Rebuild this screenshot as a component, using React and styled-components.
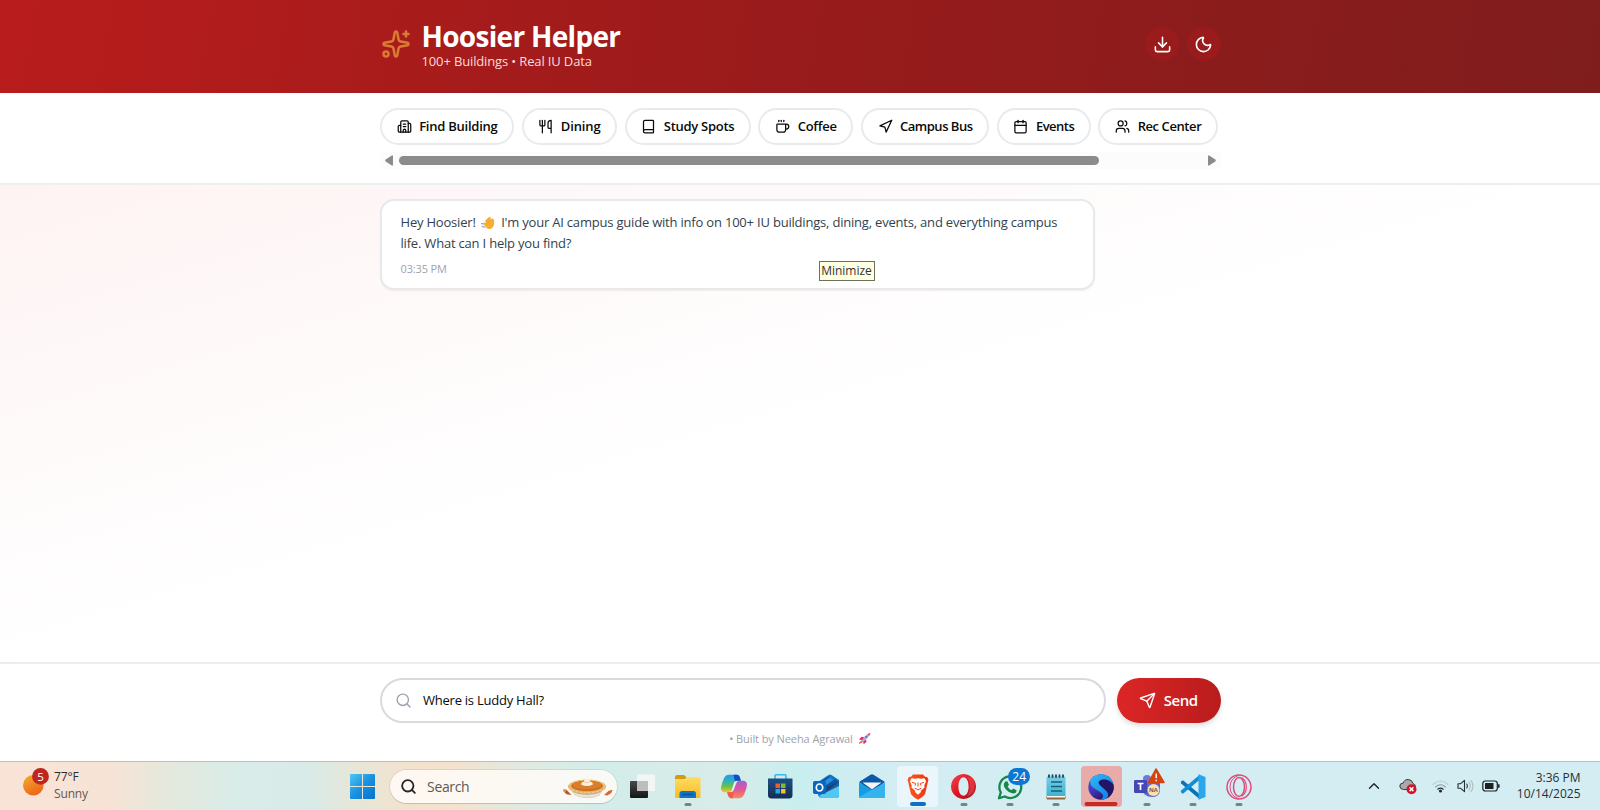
import React from "react";
import styled, { createGlobalStyle } from "styled-components";
import {
  Sparkles, Building2, Utensils, Book, Coffee, Navigation, Calendar,
  Users, Download, Moon, Send, Search, ChevronUp,
} from "lucide-react";

const GlobalStyle = createGlobalStyle`
  *, *::before, *::after { box-sizing: border-box; }
  body {
    margin: 0;
    background: #fff;
    font-family: "Open Sans", "Noto Sans", sans-serif;
    color: #111827;
  }
  svg { display: block; flex: none; }
`;

const Screen = styled.div`
  width: 1600px;
  height: 810px;
  display: flex;
  flex-direction: column;
  overflow: hidden;
`;

const Container = styled.div`
  width: 841px;
  margin: 0 auto;
`;

/* Header */
const Header = styled.header`
  height: 92.5px;
  flex: none;
  background: linear-gradient(100deg, #b91c1c, #991b1b 50%, #7f1d1d);
`;
const HeaderInner = styled(Container)`
  display: flex;
  align-items: center;
  height: 88px;
`;
const Brand = styled.div`
  display: flex;
  align-items: center;
  gap: 11px;
  padding-left: 1px;
  svg { color: #d97b32; }
`;
const Title = styled.h1`
  margin: 0;
  font-size: 28px;
  line-height: 34px;
  font-weight: 700;
  letter-spacing: -0.7px;
  color: #fff;
`;
const Subtitle = styled.p`
  margin: 0;
  font-size: 13px;
  line-height: 17px;
  letter-spacing: -0.14px;
  color: #fbdcdc;
`;
const HeaderActions = styled.div`
  display: flex;
  gap: 7.5px;
  margin-left: auto;
`;
const RoundButton = styled.button`
  width: 34px;
  height: 34px;
  padding: 0;
  border: 0;
  border-radius: 50%;
  display: grid;
  place-items: center;
  background: #991b1b;
  color: #fff;
`;

/* Quick actions */
const QuickNav = styled.nav`
  height: 92px;
  flex: none;
  padding-top: 15px;
  border-bottom: 2px solid #eeeff1;
  background: #fff;
`;
const Chips = styled.div`
  display: flex;
  gap: 7.6px;
  padding-left: 0.5px;
`;
const Chip = styled.button`
  height: 37.5px;
  display: flex;
  align-items: center;
  gap: 7.5px;
  padding: 0 14.6px 0 14.7px;
  border: 2px solid #e8eaee;
  border-radius: 19px;
  background: #fff;
  color: #0a0a0a;
  font: 600 13px/20px "Open Sans", sans-serif;
  letter-spacing: ${(p) => p.$tracking}px;
  white-space: nowrap;
`;
const ScrollTrack = styled.div`
  height: 17px;
  margin-top: 7px;
  padding: 0 5px;
  display: flex;
  align-items: center;
  background: #fcfcfc;
`;
const ScrollThumb = styled.div`
  width: 699.5px;
  height: 9px;
  margin-left: 6.5px;
  margin-right: auto;
  border-radius: 5px;
  background: #8b8b8b;
`;

/* Conversation */
const Chat = styled.main`
  flex: 1;
  min-height: 0;
  padding-top: 14.4px;
  background: linear-gradient(to bottom right, #fef3f3, #fff 50%, #fff);
`;
const Bubble = styled.article`
  position: relative;
  width: 714.5px;
  height: 91px;
  padding: 11px 18.5px;
  margin-left: 0.5px;
  border: 2px solid #e7e9ed;
  border-radius: 14px;
  background: #fff;
  box-shadow: 0 1px 2px rgba(0, 0, 0, 0.06);
`;
const Line = styled.p`
  margin: 0;
  display: flex;
  align-items: center;
  font-size: 13px;
  line-height: 21.6px;
  letter-spacing: -0.2px;
  color: #333f4e;
  white-space: nowrap;
  svg { margin: 0 6px 0 5.5px; }
`;
const Stamp = styled.time`
  display: block;
  margin-top: 6.4px;
  font-size: 11px;
  line-height: 16px;
  letter-spacing: -0.15px;
  color: #9ca3af;
`;
const Tooltip = styled.div`
  position: absolute;
  left: 436.5px;
  top: 60px;
  width: 56px;
  height: 20px;
  border: 1px solid #6d7058;
  background: #ffffe1;
  color: #333;
  font-size: 12px;
  line-height: 18px;
  text-align: center;
`;

/* Composer */
const Composer = styled.footer`
  height: 99.5px;
  flex: none;
  padding-top: 14px;
  border-top: 2px solid #ecedf0;
  background: #fff;
`;
const InputRow = styled.div`
  display: flex;
  gap: 11px;
  padding-left: 0.5px;
`;
const InputBox = styled.div`
  flex: 1;
  height: 45px;
  display: flex;
  align-items: center;
  gap: 11px;
  padding-left: 13px;
  border: 2px solid #d7dade;
  border-radius: 23px;
  font-size: 13px;
  letter-spacing: -0.24px;
  color: #0a0a0a;
  svg { color: #9ca3af; }
`;
const SendButton = styled.button`
  width: 104px;
  height: 45px;
  display: flex;
  align-items: center;
  justify-content: center;
  gap: 7.5px;
  border: 0;
  border-radius: 23px;
  background: linear-gradient(to right, #dc2626, #b91c1c);
  box-shadow: 0 3px 5px rgba(0, 0, 0, 0.13);
  color: #fff;
  font: 600 15px/20px "Open Sans", sans-serif;
  letter-spacing: -0.4px;
`;
const Credit = styled.p`
  margin: 8px 0 0;
  display: flex;
  justify-content: center;
  align-items: center;
  gap: 5px;
  font-size: 11px;
  line-height: 16px;
  letter-spacing: -0.08px;
  color: #9ca3af;
`;

/* Taskbar */
const Taskbar = styled.div`
  height: 49px;
  flex: none;
  display: flex;
  border-top: 1px solid #b2c1c1;
  background: linear-gradient(90deg, #f9e3d7 0, #f7e3d6 110px, #e6e8dc 165px, #d8ece8 235px,
    #d8ebe8 310px, #e6e6d9 350px, #f4e2cc 420px, #f2e3cf 460px, #dcebe4 540px, #d3edea 600px,
    #d8ece8 720px, #c9eeef 800px, #d3edf3 900px, #d3edf3 1600px);
`;
const Weather = styled.div`
  width: 339.4px;
  padding: 6px 0 0 23px;
  display: flex;
  align-items: flex-start;
  gap: 5px;
`;
const WeatherText = styled.div`
  font-size: 12px;
  line-height: 17px;
  letter-spacing: -0.15px;
  color: #2b2b2b;
  span { display: block; color: #5d5955; }
`;
const Slot = styled.div`
  position: relative;
  width: 45.9px;
  height: 48px;
  display: flex;
  justify-content: center;
  padding-top: 11.5px;
`;
const TeamsSlot = styled(Slot)`
  padding-top: 6px;
  padding-left: 5px;
`;
const Tile = styled.div`
  position: relative;
  width: 41px;
  height: 41px;
  margin-top: -8px;
  padding-top: 8px;
  display: flex;
  justify-content: center;
  border-radius: 4px;
  background: ${(p) => p.$color};
`;
const Indicator = styled.i`
  position: absolute;
  bottom: ${(p) => p.$bottom ?? 4}px;
  left: 50%;
  width: ${(p) => p.$width ?? 7}px;
  height: 3.4px;
  border-radius: 2px;
  transform: translateX(-50%);
  background: ${(p) => p.$color ?? "#788385"};
`;
const Count = styled.span`
  position: absolute;
  left: 21.5px;
  top: 5.5px;
  width: 22px;
  height: 17px;
  border-radius: 9px;
  background: #0b76d4;
  color: #fff;
  font-size: 12px;
  line-height: 17px;
  text-align: center;
`;
const SearchBox = styled.div`
  width: 227.5px;
  height: 33px;
  margin: 8px 2.5px 0 4.3px;
  padding: 0 4px 0 10.5px;
  display: flex;
  align-items: center;
  border-radius: 17px;
  background: rgba(255, 252, 247, 0.86);
  box-shadow: 0 0 0 0.7px rgba(120, 110, 90, 0.18), 0 1px 1px rgba(0, 0, 0, 0.12);
  font-size: 14px;
  letter-spacing: -0.35px;
  color: #5c5a58;
  span { margin: 0 auto 0 10px; }
`;
const Tray = styled.div`
  margin-left: auto;
  padding-right: 19.5px;
  display: flex;
`;
const TrayIcons = styled.div`
  height: 48px;
  display: flex;
  align-items: center;
  color: #1c2224;
`;
const TrayGap = styled.i`
  width: ${(p) => p.$width}px;
`;
const Clock = styled.div`
  width: 80.5px;
  padding-top: 7.5px;
  font-size: 12px;
  line-height: 16.5px;
  text-align: right;
  color: #2a3032;
`;

const chips = [
  ["Find Building", Building2, -0.25], ["Dining", Utensils, -0.15], ["Study Spots", Book, -0.29],
  ["Coffee", Coffee, -0.25], ["Campus Bus", Navigation, -0.5], ["Events", Calendar, -0.5],
  ["Rec Center", Users, -0.42],
];

const Grad = ({ id, stops, x2 = 0, y2 = 1 }) => (
  <linearGradient id={id} x1="0" y1="0" x2={x2} y2={y2}>
    {stops.map((c, i) => <stop key={i} offset={i / (stops.length - 1)} stopColor={c} />)}
  </linearGradient>
);

const Wave = () => (
  <svg width="14" height="14" viewBox="0 0 14 14">
    <path d="M.3 7.600l2.700.3M1.300 10.300l2.200.8" stroke="#8fa9bd" strokeWidth="1.300" strokeLinecap="round" />
    <path d="M2.600 7.800Q1.900 6.200 4 6.600L5.600 7 4.300 4.900Q4 3.800 5.200 3.800L7.800 1.300Q9.400.1 9.700 1.700L9.300 3.400 11.300 2.300Q13.300 2.700 13.200 6.500 13.100 11.800 9.500 12.900 6 13.400 4.500 11Z" fill="#f8ae34" />
    <path d="M5.300 3.800L8 7M7.300 2.300L9.300 5.400M4.400 5.500L7 8.700" stroke="#e8982a" strokeWidth=".5" />
  </svg>
);

const Rocket = () => (
  <svg width="13" height="13" viewBox="0 0 14 14">
    <path d="M1 8.200L4 5.200l3.300.6-2 3.200zM5.400 9.400l3-2 .8 3.100-3.100 2.600z" fill="#e92273" />
    <path d="M4 9.800Q6.400 4 12.700 1.200 11.600 7 5.400 10.800z" fill="#b7aac9" />
    <path d="M10 2.500L13.400.7 12 4.500Q11.500 3 10 2.500z" fill="#f1327c" />
    <circle cx="8.900" cy="5.200" r="1.200" fill="#5a79c8" />
    <path d="M3.800 9.200l1.500 1.500L2.900 12l-2 1 .8-2.300z" fill="#f46032" />
  </svg>
);

const Pie = () => (
  <svg width="50" height="24" viewBox="0 0 50 24">
    <path d="M.7 14l3 1.100 4.800 5-5-.9-3-3z" fill="#bd5426" />
    <path d="M.5 14l2 .5.3 2.700-2.300-1z" fill="#e5a15c" />
    <path d="M41 20l4.800-4.200 4-1-1.500 3.200-4 2.500z" fill="#d8652e" />
    <path d="M7 13h34l-4.700 7.400Q24 25.600 12 20.600z" fill="#c0b09c" />
    <path d="M9 17Q24 23 39 17l-3 3.500Q24 25 12 20.500z" fill="#e8e1d7" />
    <ellipse cx="24" cy="11.600" rx="19" ry="7" fill="#e3a959" />
    <ellipse cx="24" cy="11.500" rx="17.600" ry="6.200" fill="none" stroke="#f4c883" strokeWidth="1.400" strokeDasharray="3 1" />
    <ellipse cx="24" cy="10.700" rx="15.600" ry="5.200" fill="#c96e20" />
    <ellipse cx="24" cy="10.100" rx="14.400" ry="4.200" fill="#d97f2b" />
    <path d="M18 9.600q.3-2.500 3-3-.4-2 1.800-2.600L24 .5l1.500 3.600q2.200.6 1.600 2.500 2.800.5 2.800 3-5.800 3-11.900 0z" fill="#fff0dc" />
    <path d="M21 6.800q3.200 1.800 6-.2" fill="none" stroke="#d5b899" strokeWidth=".7" />
  </svg>
);

const Sun = () => (
  <svg width="26" height="29" viewBox="0 0 26 29">
    <defs><Grad id="sun" x2={0.5} stops={["#efb02f", "#f18a24", "#ee6718"]} /></defs>
    <circle cx="10.300" cy="17.200" r="10.300" fill="url(#sun)" />
    <circle cx="17.500" cy="8.400" r="8.400" fill="#bd271e" />
    <text x="17.600" y="12.500" textAnchor="middle" fontSize="11.500" fill="#fff">5</text>
  </svg>
);

const Windows = () => (
  <svg width="25" height="25" viewBox="0 0 25 25">
    <defs><Grad id="win" x2={1} stops={["#4ac8f6", "#1a90e0", "#0572cd"]} /></defs>
    <path d="M1 0h11v12H0V1q0-1 1-1zM13 0h11q1 0 1 1v11H13zM0 13h12v12H1q-1 0-1-1zM13 13h12v11q0 1-1 1H13z" fill="url(#win)" />
  </svg>
);

const TaskView = () => (
  <svg width="25" height="25" viewBox="0 0 25 25">
    <defs><Grad id="tv" stops={["#494949", "#151515"]} /></defs>
    <rect y="7" width="18" height="17" rx="1" fill="url(#tv)" />
    <rect x="7" y=".5" width="18" height="16.500" rx="1" fill="#f4f5f5" />
    <rect x="7" y="7" width="11" height="10" fill="#bcbebe" />
  </svg>
);

const Folder = () => (
  <svg width="26" height="24" viewBox="0 0 26 24">
    <defs><Grad id="fo" stops={["#ffdb63", "#f7bd26"]} /></defs>
    <path d="M0 3q0-2 2-2h6.500q1.500 0 2.500 2l1 2H0z" fill="#d39b17" />
    <path d="M0 5h9.500l3-1.700H24q1.500 0 1.500 1.500V23q0 1-1 1H1q-1 0-1-1z" fill="url(#fo)" />
    <path d="M4.500 24v-4.500q0-2.500 2.500-2.500h11.500q2.500 0 2.500 2.500V24z" fill="#1373c5" />
    <path d="M7.500 20.500h10.500" stroke="#0754a0" strokeWidth="1.400" strokeLinecap="round" />
  </svg>
);

const Copilot = () => (
  <svg width="26" height="25" viewBox="0 0 26 25">
    <defs>
      <Grad id="cp1" stops={["#229bf1", "#2ab2c0", "#6bc04a", "#f5c529"]} />
      <Grad id="cp2" stops={["#a75bd8", "#e0579a", "#fb8a52"]} />
    </defs>
    <path d="M8 .8h8.200q2 .2 2.800 2.900l.8 3h-3.500q-2.800 0-3.700 3L11 15q-1 3.300-4 3.300H3.400Q0 18-.1 14 .3 10 3 4.200 4.700.8 8 .8z" fill="url(#cp1)" />
    <path d="M18 24.200H9.800q-2-.2-2.800-2.900l-.8-3h3q2.800 0 3.700-3L15 10q1-3.300 4-3.300h3.600Q26 7 26 11q-.3 4-3 9.800-1.700 3.400-5 3.400z" fill="url(#cp2)" />
    <path d="M12.500.8h3.700q2 .2 2.800 2.900l.8 3h-3.500q-1.400 0-2.300.9z" fill="#134bc2" />
    <path d="M6.200 18.300h3q2.800 0 3.300-2.500l-.7 8.400H9.800q-2-.2-2.800-2.900z" fill="#f35a48" />
    <path d="M13.400 8.400q.9-1.600 2.500-1.600-1 .8-1.500 2.800l-1.900 6.500q-.7 2-2.100 2.100.9-.8 1.400-2.600z" fill="#e6f3f1" />
  </svg>
);

const Store = () => (
  <svg width="25" height="25" viewBox="0 0 25 25">
    <defs><Grad id="st" stops={["#1b5186", "#152d51"]} /></defs>
    <path d="M7 5V2q0-1.300 1.300-1.300h8.400Q18 .7 18 2v3" fill="none" stroke="#3bb7e7" strokeWidth="1.600" />
    <path d="M0 4.500h24.500V21q0 3.500-3.500 3.500H3.500Q0 24.500 0 21z" fill="url(#st)" />
    <path d="M7.500 9.500h4.500v4.500h-4.500z" fill="#f15b2d" /><path d="M13 9.500h4.500v4.500h-4.500z" fill="#80bd28" />
    <path d="M7.500 15h4.500v4.500h-4.500z" fill="#23a8e5" /><path d="M13 15h4.500v4.500h-4.500z" fill="#f9bd25" />
  </svg>
);

const Outlook = () => (
  <svg width="26" height="25" viewBox="0 0 26 25">
    <path d="M5 8L15.500 1Q17 0 18.500 1L26 6v15q0 3-3 3H9q-3 0-4-3z" fill="#1679c8" />
    <path d="M8 7l8-5 9 5-10 9-7-2z" fill="#0c55a1" />
    <path d="M9 9l8-6 4 2.500-11 8z" fill="#2591dc" />
    <path d="M26 8v13q0 3-3 3H9q-2 0-3-2l13-8z" fill="#51c7f1" />
    <path d="M26 7v5l-14 7 2-6z" fill="#133e7b" opacity=".75" />
    <rect y="7" width="13" height="13" rx="1.800" fill="#0968bd" />
    <ellipse cx="6.500" cy="13.500" rx="3.200" ry="3.500" fill="none" stroke="#fff" strokeWidth="1.700" />
  </svg>
);

const Mail = () => (
  <svg width="26" height="25" viewBox="0 0 26 25">
    <path d="M0 8L11.500.7Q13-.3 14.500.7L26 8 13 18z" fill="#0c59a7" />
    <path d="M0 8.500L26 23q0 1-1.500 1H1.500Q0 24 0 22.500z" fill="#159ee1" />
    <path d="M26 8.500v14q0 1.500-1.500 1.500H1.500L0 23z" fill="#35b3ee" />
    <path d="M3.500 8.500h19L13 15.300z" fill="#f6f6f4" />
  </svg>
);

const Brave = () => (
  <svg width="22" height="26" viewBox="0 0 22 26">
    <defs><Grad id="br" x2={1} y2={0} stops={["#f9581f", "#f03411"]} /></defs>
    <path d="M6 .5h10l2 2.200 2.200.2L21.500 6l-.8 2.500-2.500 11Q17.500 22 11 25.800 4.500 22 3.800 19.500L1.300 8.500.5 6 1.800 2.900l2.200-.2z" fill="url(#br)" />
    <path d="M11 4.200l2.800.6 3.600-.5 1.700 3-1.800 4.300.2 2-3.800 3.300.3 1.200-3 2.600-3-2.600.3-1.200-3.800-3.300.2-2L2.900 7.300l1.700-3 3.600.5z" fill="#fff" />
    <path d="M5 8.300l3.700 1.200-.8 2.200M17 8.300l-3.700 1.200.8 2.200M7.600 14l3.400 1.900L14.400 14M11 8.500v4" stroke="#f14a1b" strokeWidth="1" fill="none" />
  </svg>
);

const Opera = () => (
  <svg width="25" height="25" viewBox="0 0 25 25">
    <defs><Grad id="op" x2={1} stops={["#f44746", "#dd1423", "#a90e1c"]} /></defs>
    <path fillRule="evenodd" d="M12.500 0a12.500 12.500 0 1 0 .01 0zM12.500 3.200c3 0 5.100 4 5.100 9.300s-2.100 9.300-5.100 9.300-5.100-4-5.100-9.300 2.100-9.300 5.100-9.300z" fill="url(#op)" />
    <path d="M16 3.200q5.500-1.500 7.500 4 1.300 5-.7 10-3 5.200-7 4.300 3-2.500 3-9T16 3.200z" fill="#f66a68" opacity=".4" />
  </svg>
);

const WhatsApp = () => (
  <svg width="26" height="26" viewBox="0 0 26 26">
    <path d="M2 24.200L3.800 18.400A10.900 10.900 0 1 1 7.800 22.500z" fill="none" stroke="#17864b" strokeWidth="2.300" strokeLinejoin="round" />
    <path d="M8.300 7.500l2-.2 1.700 3.500-1.400 1.600q1.300 2.600 4 3.800l1.600-1.700 3.300 1.700q.2 3.200-3.600 3.300-3.600-.3-6.700-3.800T7 9.500z" fill="#17864b" />
  </svg>
);

const Notepad = () => (
  <svg width="20" height="26" viewBox="0 0 20 26">
    <defs><Grad id="np" stops={["#77cfe6", "#42b1cd"]} /></defs>
    <path d="M.5 22h19v2.500q0 1-1 1h-17q-1 0-1-1z" fill="#946443" />
    <path d="M1 21.500h18v2H1z" fill="#f8f6ef" />
    <rect x=".5" y="2.500" width="19" height="19.500" rx="1" fill="url(#np)" />
    <path d="M3 1.300v1.800M6.500 1.300v1.800M10 1.300v1.800M13.500 1.300v1.800M17 1.300v1.800" stroke="#204d63" strokeWidth="1.900" strokeLinecap="round" />
    <path d="M5 8h11M5 12.500h11M5 17h11" stroke="#13627d" strokeWidth="1.500" />
  </svg>
);

const Swirl = () => (
  <svg width="26" height="26" viewBox="0 0 26 26">
    <defs>
      <Grad id="sw1" x2={1} stops={["#35bbf7", "#087be0"]} />
      <Grad id="sw2" x2={0.6} stops={["#4a5fe0", "#463bc0", "#281363"]} />
      <clipPath id="disc"><circle cx="13" cy="13" r="12.700" /></clipPath>
    </defs>
    <g clipPath="url(#disc)">
      <rect width="26" height="26" fill="url(#sw2)" />
      <path d="M0 0h26v12Q20 4.500 13.500 5.800q-5 1.700-1.500 5l7 6Q23 21 17 26h-5q5.500-3.500 1.500-7L5 13.500Q.5 9.500 3 4z" fill="url(#sw1)" />
      <path d="M26 9v13l-7.500 4q4-5-.2-9L12 11.200Q9 8 13 6q7-1.800 13 5z" fill="#221567" />
    </g>
  </svg>
);

const Teams = () => (
  <svg width="31" height="32" viewBox="0 0 31 32">
    <circle cx="13" cy="11" r="4" fill="#7278d3" />
    <circle cx="22" cy="12" r="3" fill="#555bc2" />
    <path d="M8 14h18v9q-1 6-8 6-8 0-10-7z" fill="#6268c8" />
    <rect y="12" width="13" height="13" rx="1.200" fill="#4249b5" />
    <path d="M3.500 15.500h6M6.500 15.500v6.500" stroke="#fff" strokeWidth="1.700" />
    <path d="M22 1L30 14.500H14.500z" fill="#d3440f" stroke="#d3440f" strokeWidth="1.500" strokeLinejoin="round" />
    <path d="M22.200 5.500v4.700M22.200 11.700v1.500" stroke="#fff" strokeWidth="1.400" />
    <circle cx="19.500" cy="22" r="6" fill="#f8dfb6" />
    <text x="19.500" y="24.300" textAnchor="middle" fontSize="6" fontWeight="700" fill="#795d40">NA</text>
  </svg>
);

const Code = () => (
  <svg width="26" height="26" viewBox="0 0 26 26">
    <path d="M1 7.500l2-1.200L20 20.500v5L.8 9.300z" fill="#0873b8" />
    <path d="M1 18.500l2 1.200L20 5.500v-5L.8 16.700z" fill="#148dd2" />
    <path d="M18.500.3L25.500 3v20l-7 2.700z" fill="#29a6ec" />
  </svg>
);

const OperaGX = () => (
  <svg width="26" height="26" viewBox="0 0 26 26" fill="none" stroke="#df4c7b" strokeWidth="1.500">
    <circle cx="13" cy="13" r="12" />
    <ellipse cx="13" cy="13" rx="5.500" ry="9.500" />
    <path d="M13 1Q4 4.500 4 13t9 12" strokeWidth="1" />
    <path d="M15.500 3.800q4.800 2.500 4.800 9.200t-4.800 9.200" strokeWidth="1.200" />
  </svg>
);

const CloudError = () => (
  <svg width="18" height="17" viewBox="0 0 18 17">
    <path d="M4.300 11.500Q.7 11 .8 8T4 5.200Q5.500 1.300 9.300 1.500T14 5.500q2.500.8 2.500 3.300l-4 2.700z" fill="#aaa9a8" stroke="#373b3d" strokeWidth="1" />
    <circle cx="12.500" cy="11.200" r="5" fill="#d31325" />
    <path d="M10.600 9.300l3.800 3.800m0-3.800l-3.800 3.800" stroke="#fff" strokeWidth="1.500" />
  </svg>
);

const Wifi = () => (
  <svg width="17" height="13" viewBox="0 0 17 13" fill="none" strokeLinecap="round">
    <path d="M1 4.500q7.500-7 15 0" stroke="#bccbcf" strokeWidth="1.100" />
    <path d="M3.500 7q5-4.500 10 0" stroke="#8e9da1" strokeWidth="1.100" />
    <path d="M5.800 9.200q2.700-2.200 5.400 0" stroke="#242a2c" strokeWidth="1.200" />
    <circle cx="8.500" cy="11" r="1.600" fill="#242a2c" />
  </svg>
);

const Speaker = () => (
  <svg width="18" height="14" viewBox="0 0 18 14" fill="none" stroke="#273033" strokeWidth="1.100" strokeLinecap="round" strokeLinejoin="round">
    <path d="M1 4.700h2.700L7.500 1.300v11.400L3.700 9.300H1z" />
    <path d="M9.800 5q1.300 2 0 4" />
    <path d="M12 3q2.500 4 0 8M14.200 1.500q3.500 5.500 0 11" stroke="#aebdc1" />
  </svg>
);

const Battery = () => (
  <svg width="18" height="12" viewBox="0 0 18 12">
    <rect x=".8" y="1" width="14.500" height="10" rx="2.500" fill="none" stroke="#1b2022" strokeWidth="1.200" />
    <rect x="3" y="3" width="8.500" height="6" rx=".6" fill="#1b2022" />
    <path d="M16.800 4.300v3.400" stroke="#1b2022" strokeWidth="1.500" />
  </svg>
);

const TaskItem = ({ icon: Icon, running, children }) => (
  <Slot>
    <Icon />
    {children}
    {running && <Indicator />}
  </Slot>
);

export default function App() {
  return (
    <Screen>
      <GlobalStyle />
      <Header>
        <HeaderInner>
          <Brand>
            <Sparkles size={30} strokeWidth={2} />
            <div>
              <Title>Hoosier Helper</Title>
              <Subtitle>100+ Buildings • Real IU Data</Subtitle>
            </div>
          </Brand>
          <HeaderActions>
            <RoundButton aria-label="Download"><Download size={19} /></RoundButton>
            <RoundButton aria-label="Dark mode"><Moon size={19} /></RoundButton>
          </HeaderActions>
        </HeaderInner>
      </Header>

      <QuickNav>
        <Container>
          <Chips>
            {chips.map(([label, Icon, tracking]) => (
              <Chip key={label} $tracking={tracking}>
                <Icon size={15} strokeWidth={2} />
                {label}
              </Chip>
            ))}
          </Chips>
          <ScrollTrack>
            <svg width="8" height="11" viewBox="0 0 8 11"><path d="M8 .5v10H6.800L.3 6.300V4.700L6.800.5z" fill="#8b8b8b" /></svg>
            <ScrollThumb />
            <svg width="8" height="11" viewBox="0 0 8 11"><path d="M0 .5v10h1.200L7.700 6.300V4.700L1.200.5z" fill="#8b8b8b" /></svg>
          </ScrollTrack>
        </Container>
      </QuickNav>

      <Chat>
        <Container>
          <Bubble>
            <Line>
              <span>Hey Hoosier!</span>
              <Wave />
              <span>I'm your AI campus guide with info on 100+ IU buildings, dining, events, and everything campus</span>
            </Line>
            <Line>life. What can I help you find?</Line>
            <Stamp>03:35 PM</Stamp>
            <Tooltip>Minimize</Tooltip>
          </Bubble>
        </Container>
      </Chat>

      <Composer>
        <Container>
          <InputRow>
            <InputBox><Search size={17} />Where is Luddy Hall?</InputBox>
            <SendButton><Send size={17} />Send</SendButton>
          </InputRow>
          <Credit>• Built by Neeha Agrawal <Rocket /></Credit>
        </Container>
      </Composer>

      <Taskbar>
        <Weather>
          <Sun />
          <WeatherText>77°F<span>Sunny</span></WeatherText>
        </Weather>
        <TaskItem icon={Windows} />
        <SearchBox>
          <Search size={17} strokeWidth={2.6} color="#252525" />
          <span>Search</span>
          <Pie />
        </SearchBox>
        <TaskItem icon={TaskView} />
        <TaskItem icon={Folder} running />
        <TaskItem icon={Copilot} />
        <TaskItem icon={Store} />
        <TaskItem icon={Outlook} />
        <TaskItem icon={Mail} />
        <Slot>
          <Tile $color="#eaf6fb"><Brave /><Indicator $width={16} $color="#0f6fc5" $bottom={1} /></Tile>
        </Slot>
        <TaskItem icon={Opera} running />
        <TaskItem icon={WhatsApp} running><Count>24</Count></TaskItem>
        <TaskItem icon={Notepad} running />
        <Slot>
          <Tile $color="#e9aba8"><Swirl /><Indicator $width={33} $color="#c22c25" $bottom={1} /></Tile>
        </Slot>
        <TeamsSlot><Teams /><Indicator /></TeamsSlot>
        <TaskItem icon={Code} running />
        <TaskItem icon={OperaGX} running />
        <Tray>
          <TrayIcons>
            <ChevronUp size={18} strokeWidth={1.8} />
            <TrayGap $width={16} /><CloudError />
            <TrayGap $width={15.5} /><Wifi />
            <TrayGap $width={7.5} /><Speaker />
            <TrayGap $width={7.5} /><Battery />
          </TrayIcons>
          <Clock>3:36 PM<br />10/14/2025</Clock>
        </Tray>
      </Taskbar>
    </Screen>
  );
}
